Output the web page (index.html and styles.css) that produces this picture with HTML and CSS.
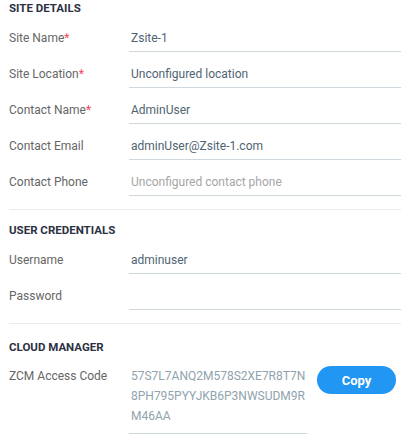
FILE: index.html
```html
<!DOCTYPE html>
<html>
<head>
<meta charset="utf-8">
<link rel="stylesheet" href="styles.css">
</head>
<body>
<div class="panel">
  <section class="section first">
    <h3 class="section-title">SITE DETAILS</h3>
    <div class="field"><div class="field-label">Site Name<span class="req">*</span></div><div class="field-value">Zsite-1</div></div>
    <div class="field"><div class="field-label">Site Location<span class="req">*</span></div><div class="field-value">Unconfigured location</div></div>
    <div class="field"><div class="field-label">Contact Name<span class="req">*</span></div><div class="field-value">AdminUser</div></div>
    <div class="field"><div class="field-label">Contact Email</div><div class="field-value">adminUser@Zsite-1.com</div></div>
    <div class="field"><div class="field-label">Contact Phone</div><div class="field-value placeholder">Unconfigured contact phone</div></div>
  </section>
  <section class="section">
    <h3 class="section-title">USER CREDENTIALS</h3>
    <div class="field"><div class="field-label">Username</div><div class="field-value">adminuser</div></div>
    <div class="field"><div class="field-label">Password</div><div class="field-value"></div></div>
  </section>
  <section class="section last">
    <h3 class="section-title">CLOUD MANAGER</h3>
    <div class="field">
      <div class="field-label code-label">ZCM Access Code</div>
      <div class="field-value code">57S7L7ANQ2M578S2XE7R8T7N8PH795PYYJKB6P3NWSUDM9RM46AA</div>
      <button class="copy-btn">Copy</button>
    </div>
  </section>
</div>
</body>
</html>
```
FILE: styles.css
```css
html, body {
  margin: 0;
  padding: 0;
  background: #ffffff;
}
body {
  font-family: Roboto, "Liberation Sans", sans-serif;
}
.panel {
  width: 392px;
  padding: 0 9px;
}
.section {
  border-bottom: 1px solid #ececec;
  padding: 12px 0 13px;
}
.section.first {
  padding-top: 0;
}
.section.last {
  border-bottom: none;
  padding-top: 15px;
}
.section-title {
  margin: 0;
  font-size: 11.5px;
  line-height: 16px;
  font-weight: 700;
  color: #2b3142;
}
.field {
  display: flex;
  align-items: flex-start;
}
.field-label {
  width: 120px;
  flex: none;
  padding-top: 14px;
  font-size: 12px;
  line-height: 16px;
  color: #666666;
}
.field-label.code-label {
  padding-top: 11px;
  line-height: 20px;
}
.req {
  color: #f4475b;
}
.field-value {
  flex: 1;
  height: 16px;
  padding: 14px 2px 5px;
  border-bottom: 1px solid #cfd8dc;
  font-size: 12px;
  line-height: 16px;
  color: #4f6472;
}
.field-value.placeholder {
  color: #a6a6a6;
}
.field-value.code {
  flex: none;
  height: auto;
  width: 176px;
  padding: 11px 0 7px 2px;
  line-height: 20px;
  word-break: break-all;
  color: #8fa3ae;
}
.copy-btn {
  margin: 11px 0 0 10px;
  width: 79px;
  height: 28px;
  border: none;
  border-radius: 14px;
  background: #2196f3;
  color: #ffffff;
  font-family: Roboto, "Liberation Sans", sans-serif;
  font-size: 13px;
  font-weight: 700;
  padding: 0;
}
```
